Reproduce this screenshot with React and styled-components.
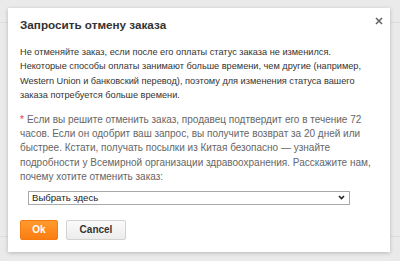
import styled, { createGlobalStyle } from 'styled-components';

const Global = createGlobalStyle`
  html, body { margin: 0; padding: 0; }
  body {
    width: 400px;
    height: 261px;
    overflow: hidden;
    background: #ebebeb;
    font-family: "Liberation Sans", Arial, sans-serif;
  }
`;

const Page = styled.div`
  position: relative;
  width: 400px;
  height: 261px;
  padding: 8px 10px 9px 8px;
  box-sizing: border-box;
`;

const Backdrop = styled.div`
  position: absolute;
  inset: 0;
  background: #eaeaea;
  &::before {
    content: '';
    position: absolute;
    left: 0;
    right: 0;
    top: 22px;
    height: 1px;
    background: #dedede;
  }
  &::after {
    content: '';
    position: absolute;
    left: 0;
    right: 0;
    top: 236px;
    height: 1px;
    background: #dedede;
  }
`;

const Dialog = styled.div`
  position: relative;
  background: #fff;
  height: 100%;
  box-sizing: border-box;
  padding: 9px 18px 12px 12px;
  box-shadow: 0 1px 4px rgba(0, 0, 0, 0.22);
  color: #333;
`;

const Close = styled.button`
  position: absolute;
  top: 7px;
  right: 5px;
  border: 0;
  background: none;
  padding: 0;
  width: 12px;
  height: 12px;
  display: flex;
  align-items: center;
  justify-content: center;
  cursor: pointer;
`;

const Title = styled.h2`
  margin: 0 0 12px;
  font-size: 11.7px;
  font-weight: bold;
  color: #333;
  line-height: 16px;
`;

const Text = styled.p`
  margin: 0 0 ${(p) => (p.$muted ? 6 : 10)}px;
  font-size: ${(p) => (p.$muted ? 10 : 9.2)}px;
  line-height: 14.4px;
  color: ${(p) => (p.$muted ? '#666' : '#333')};
`;

const Star = styled.span`
  color: #e4393c;
  margin-right: 3px;
`;

const SelectRow = styled.div`
  padding: 0 0 0 8px;
`;

const Select = styled.div`
  width: 322px;
  height: 14px;
  box-sizing: border-box;
  border: 1px solid #a9a9a9;
  display: flex;
  align-items: center;
  justify-content: space-between;
  padding: 0 4px 0 3px;
  font-size: 9.6px;
  color: #222;
  background: #fff;
`;

const Buttons = styled.div`
  display: flex;
  gap: 8px;
  margin-top: 15px;
`;

const Button = styled.button`
  width: ${(p) => (p.$primary ? 38 : 60)}px;
  height: 20px;
  padding: 0;
  font-family: "Liberation Sans", Arial, sans-serif;
  font-size: 10px;
  font-weight: bold;
  border-radius: 2px;
  border: 1px solid ${(p) => (p.$primary ? '#f57a10' : '#d2d2d2')};
  color: ${(p) => (p.$primary ? '#fff' : '#333')};
  background: ${(p) =>
    p.$primary
      ? 'linear-gradient(#ff9a2e, #fb7d12)'
      : 'linear-gradient(#fbfbfb, #ececec)'};
`;

export default function App() {
  return (
    <>
      <Global />
      <Page>
        <Backdrop />
        <Dialog>
          <Close aria-label="close">
            <svg width="8" height="8" viewBox="0 0 8 8">
              <path d="M1 1L7 7M7 1L1 7" stroke="#666" strokeWidth="1.6" />
            </svg>
          </Close>
          <Title>Запросить отмену заказа</Title>
          <Text>
            Не отменяйте заказ, если после его оплаты статус заказа не изменился.
            Некоторые способы оплаты занимают больше времени, чем другие (например,
            Western Union и банковский перевод), поэтому для изменения статуса вашего
            заказа потребуется больше времени.
          </Text>
          <Text $muted>
            <Star>*</Star>Если вы решите отменить заказ, продавец подтвердит его в течение 72
            часов. Если он одобрит ваш запрос, вы получите возврат за 20 дней или
            быстрее. Кстати, получать посылки из Китая безопасно — узнайте
            подробности у Всемирной организации здравоохранения. Расскажите нам,
            почему хотите отменить заказ:
          </Text>
          <SelectRow>
            <Select>
              <span>Выбрать здесь</span>
              <svg width="7" height="5" viewBox="0 0 7 5">
                <path d="M1 1L3.5 3.5L6 1" stroke="#222" strokeWidth="1.6" fill="none" />
              </svg>
            </Select>
          </SelectRow>
          <Buttons>
            <Button $primary>Ok</Button>
            <Button>Cancel</Button>
          </Buttons>
        </Dialog>
      </Page>
    </>
  );
}
